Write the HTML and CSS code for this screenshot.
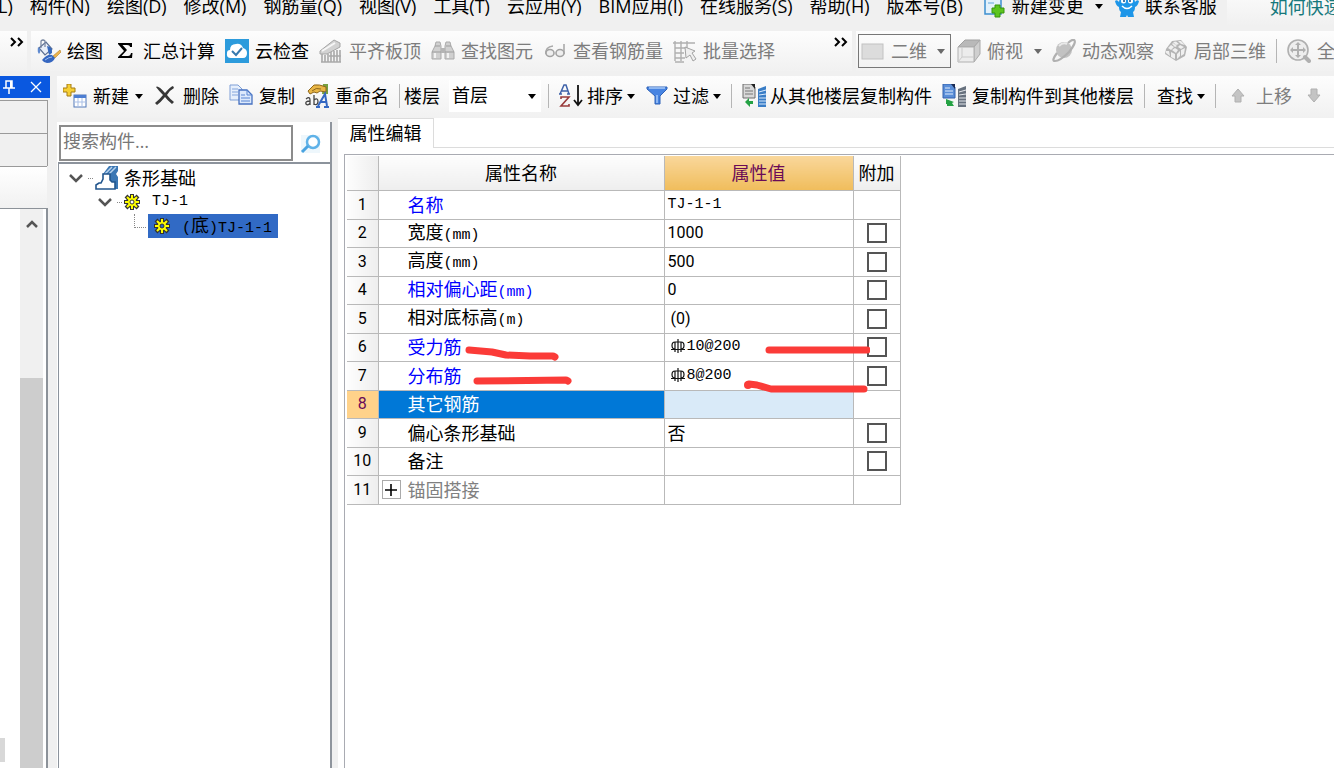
FILE: index.html
```html
<!DOCTYPE html>
<html lang="zh-CN">
<head>
<meta charset="utf-8">
<title>属性编辑</title>
<link rel="stylesheet" href="styles.css">
</head>
<body>
<div class="app">
  <nav class="menubar">
    <button class="menu">L)</button>
    <button class="menu">构件(N)</button>
    <button class="menu">绘图(D)</button>
    <button class="menu">修改(M)</button>
    <button class="menu">钢筋量(Q)</button>
    <button class="menu">视图(V)</button>
    <button class="menu">工具(T)</button>
    <button class="menu">云应用(Y)</button>
    <button class="menu">BIM应用(I)</button>
    <button class="menu">在线服务(S)</button>
    <button class="menu">帮助(H)</button>
    <button class="menu">版本号(B)</button>
    <button class="menu tool">
      <svg class="icon" viewBox="0 0 24 24"><path d="M3 0H19V20H3Z" fill="#e3f1fb" stroke="#3d8fd0" stroke-width="1.5"/><path d="M6 5H16M6 9H12" stroke="#8fc0e6" stroke-width="1.5"/><path d="M12 10H17V13H21V18H17V22H12V18H9V13H12Z" transform="translate(1 1)" fill="#5cc51e" stroke="#37930d"/></svg>
      <span>新建变更</span><i class="caret wide"></i>
    </button>
    <button class="menu tool">
      <svg class="icon" viewBox="0 0 24 24"><path d="M0 7Q2 5 4 8Q5 1 12 1Q19 1 20 8Q22 5 24 7Q23 12 20 13Q20 17 18 18L19 23H13L12 21L11 23H5L6 18Q4 17 4 13Q1 12 0 7Z" fill="#1e96e8"/><circle cx="8.500" cy="7" r="2.500" fill="#fff"/><circle cx="15.500" cy="7" r="2.500" fill="#fff"/><circle cx="9" cy="7" r="1" fill="#124a84"/><circle cx="15" cy="7" r="1" fill="#124a84"/><path d="M7 12Q12 17 17 12" stroke="#fff" stroke-width="1.500" fill="none"/></svg>
      <span>联系客服</span>
    </button>
    <a class="help" href="#">如何快速</a>
  </nav>

  <div class="bars">
    <div class="bar bar-stub"><button class="more" aria-label="更多">
      <svg width="14" height="10" viewBox="0 0 14 10"><path d="M1 1L5 5L1 9M8 1L12 5L8 9" fill="none" stroke="#000" stroke-width="2"/></svg></button></div>
    <div class="bar bar-main">
      <button class="tool">
        <svg class="icon" viewBox="0 0 24 24"><path d="M2 9L9 3L15 10L8 16Z" fill="#e9eef8" stroke="#5d6f92" stroke-width="1.200"/><path d="M4 9V2Q6 0 8 2V8" fill="none" stroke="#76849f" stroke-width="1.200"/><path d="M1 8Q0 13 2 15Q4 13 3 10Z" fill="#5f8ad0"/><path d="M10 7Q16 8 15 14L12 16Z" fill="#3769bd"/><path d="M23 11L24 13L18 19L16 17Z" fill="#ecb44d" stroke="#b67d21" stroke-width=".6"/><path d="M5 21Q10 15 15 16L18 19Q16 24 10 24Q7 24 5 21Z" fill="#3566c0"/><path d="M8 21Q12 18 15 18" stroke="#9bbcf0" fill="none"/></svg>
        <span>绘图</span></button>
      <button class="tool">
        <svg class="icon" viewBox="0 0 24 24"><path d="M5 4H19V8H17Q17 6 14 6H9.500L14 11L8.500 17H15Q17.500 17 18 14H19.500L19 19H5V18L11 12L5 5Z"/></svg>
        <span>汇总计算</span></button>
      <button class="tool">
        <svg class="icon" viewBox="0 0 24 24"><rect width="24" height="24" fill="#2c9bdc"/><path d="M6 19Q1 19 2 14Q2 11 5 11Q5 5 11 5Q16 4 18 9Q22 10 22 14Q22 19 18 19Z" fill="#fff"/><path d="M7 12L11 16L17 9" fill="none" stroke="#3679ae" stroke-width="2"/></svg>
        <span>云检查</span></button>
      <button class="tool off">
        <svg class="icon" viewBox="0 0 24 24"><path d="M1 12L15 1L21 4V8L8 15H1Z" fill="#d2d2d2" stroke="#a5a5a5"/><path d="M3 12L16 4" stroke="#f6f6f6" stroke-width="2"/><path d="M3 15V23M6 16V23M9 15V23M12 13V23M15 12V23M18 11V23M21 11V23M2 23H22M10 17H22" stroke="#a9a9a9" stroke-width="1.600"/></svg>
        <span>平齐板顶</span></button>
      <button class="tool off">
        <svg class="icon" viewBox="0 0 24 24"><path d="M4 7L5 3H9L10 7V20H1V13ZM20 7L19 3H15L14 7V20H23V13Z" fill="#d0d0d0" stroke="#aaa"/><path d="M10 9H14V14H10Z" fill="#b5b5b5"/><path d="M4 14V19M17 14V19" stroke="#f2f2f2" stroke-width="2"/><path d="M4 7H9M15 7H20M1 13H10M14 13H23" stroke="#9d9d9d"/></svg>
        <span>查找图元</span></button>
      <button class="tool off">
        <svg class="icon" viewBox="0 0 24 24"><path d="M10 7Q2 8 3 15M21 5V15" fill="none" stroke="#aaa" stroke-width="1.600"/><ellipse cx="7" cy="14" rx="4" ry="3.500" fill="#eee" stroke="#a3a3a3" stroke-width="1.600"/><ellipse cx="17" cy="14" rx="4" ry="3.500" fill="#eee" stroke="#a3a3a3" stroke-width="1.600"/></svg>
        <span>查看钢筋量</span></button>
      <button class="tool off">
        <svg class="icon" viewBox="0 0 24 24"><path d="M2 2V22M8 2V22M14 2V10M0 4H22M2 9H12M2 14H11M2 19H12M2 23H11" stroke="#b0b0b0" stroke-width="1.400"/><path d="M12 8L22 12L19 14L23 20L20 22L17 16L13 19Z" fill="#efefef" stroke="#a3a3a3"/></svg>
        <span>批量选择</span></button>
      <button class="more end" aria-label="更多工具">
        <svg width="14" height="10" viewBox="0 0 14 10"><path d="M1 1L5 5L1 9M8 1L12 5L8 9" fill="none" stroke="#000" stroke-width="2"/></svg></button>
    </div>
    <div class="bar bar-view">
      <label class="combo framed">
        <svg class="icon" viewBox="0 0 24 24"><rect x="1" y="5" width="21" height="15" fill="#dcdcdc" stroke="#c2c2c2"/></svg>
        <select class="pick off" aria-label="视图"><option>二维</option></select><i class="caret grey"></i>
      </label>
      <button class="tool off">
        <svg class="icon" viewBox="0 0 24 24"><path d="M1 8L8 1H23L17 8Z" fill="#b9b9b9" stroke="#a1a1a1"/><path d="M17 8L23 1V15L17 23Z" fill="#cfcfcf" stroke="#a9a9a9"/><path d="M1 8H17V23H1Z" fill="#ececec" stroke="#b0b0b0"/><path d="M5 8V18H17M5 18L1 23" fill="none" stroke="#cacaca"/></svg>
        <span>俯视</span><i class="caret grey wide"></i></button>
      <button class="tool off">
        <svg class="icon" viewBox="0 0 24 24"><circle cx="12" cy="11" r="8" fill="#c2c2c2"/><path d="M7 7Q11 3 15 5" fill="none" stroke="#e9e9e9" stroke-width="2"/><path d="M5 14Q-1 22 3 22Q8 22 17 13Q25 3 22 1Q20 0 16 4" fill="none" stroke="#b0b0b0" stroke-width="2.200"/></svg>
        <span>动态观察</span></button>
      <button class="tool off">
        <svg class="icon" viewBox="0 0 24 24"><path d="M8 2L17 1L23 8L21 17L12 22L1 15L2 10Z" fill="#b4b4b4"/><path d="M9 3L12 2.500L15 5L12 6ZM14 2L17 2L21 6L17 5ZM4 9L7 6L10 8L7 11ZM8 5L9 4L13 7L11 8ZM2 12L5 12L6 17L2 14ZM7 13L11 15V20L7 18ZM8 11L11 9L14 11L12 14ZM13 15L16 12V17L13 20ZM17 11L21 9L20 15L17 17ZM14 8L16 6L20 8L17 10Z" fill="#efefef"/></svg>
        <span>局部三维</span></button>
      <i class="sep"></i>
      <button class="tool off">
        <svg class="icon" viewBox="0 0 24 24"><circle cx="11" cy="11" r="10" fill="#eee" stroke="#b0b0b0" stroke-width="1.600"/><path d="M11 3L14 6H12V10H16V8L19 11L16 14V12H12V16H14L11 19L8 16H10V12H6V14L3 11L6 8V10H10V6H8Z" fill="#b0b0b0"/><path d="M18 18L22 22" stroke="#b0b0b0" stroke-width="4" stroke-linecap="round"/></svg>
        <span>全屏</span></button>
    </div>
  </div>

  <div class="body">
    <aside class="dock">
      <div class="dock-title">
        <button class="dock-btn" aria-label="固定"><svg width="12" height="14" viewBox="0 0 12 14"><path d="M3 1H9V8H3ZM0 8H12M6 8V14" fill="none" stroke="#fff" stroke-width="1.500"/><path d="M8 1V8" stroke="#fff" stroke-width="2"/></svg></button>
        <button class="dock-btn" aria-label="关闭"><svg width="12" height="12" viewBox="0 0 12 12"><path d="M1 1L11 11M11 1L1 11" stroke="#fff" stroke-width="1.300"/></svg></button>
      </div>
      <div class="dock-cell"></div>
      <div class="dock-cell"></div>
      <div class="dock-head"></div>
      <div class="dock-list">
        <div class="dock-items"><i class="dock-chip"></i></div>
        <div class="scroll">
          <button class="scroll-up" aria-label="向上"><svg width="12" height="10" viewBox="0 0 12 10"><path d="M1 8L6 3L11 8" fill="none" stroke="#555" stroke-width="2.500"/></svg></button>
          <i class="thumb"></i>
        </div>
      </div>
    </aside>

    <main class="work">
      <div class="bar bar-edit">
        <button class="tool">
          <svg class="icon" viewBox="0 0 24 24"><path d="M4 0H8V4H12V8H8V12H4V8H0V4H4Z" fill="#f6cf35" stroke="#a67c12"/><rect x="11" y="11" width="12" height="12" fill="#fff" stroke="#5378b8"/><path d="M11 11H23V14H11Z" fill="#4d7ed2"/><path d="M11 18H23M15 14V23M19 14V23" stroke="#a9bfe6"/></svg>
          <span>新建</span><i class="caret"></i></button>
        <button class="tool">
          <svg class="icon" viewBox="0 0 24 24"><path d="M3 3Q5 1 12 9Q17 3 20 2L21 4Q17 6 14 11Q17 15 21 18L19 20Q14 16 12 13Q8 18 4 21L2 19Q7 15 10 11Q6 7 3 3Z" fill="#373737"/></svg>
          <span>删除</span></button>
        <button class="tool">
          <svg class="icon" viewBox="0 0 24 24"><path d="M1 1H9L13 5V16H1Z" fill="#e6effc" stroke="#7e9fd6"/><path d="M3 5H9M3 8H9M3 11H9" stroke="#83a5dc"/><path d="M10 6H18L23 11V20H10Z" fill="#dce9fc" stroke="#4772c1" stroke-width="1.300"/><path d="M18 6V11H23M12 11H16M12 14H21M12 17H21" fill="none" stroke="#5885d2"/></svg>
          <span>复制</span></button>
        <button class="tool">
          <svg class="icon" viewBox="0 0 24 24"><path d="M18 0H23V10H17Z" fill="#76a040"/><path d="M3 7L9 1Q14 0 21 3V8L15 7L12 9L9 8L5 10Z" fill="#e9b646" stroke="#8e671c"/><path d="M7 7Q11 3 16 5" stroke="#8e671c" fill="none"/><path d="M1 15Q5 12 5 16V21M5 17Q0 17 1 20Q3 22 5 19M9 11V21M9 16Q13 13 13 18Q12 22 9 20" fill="none" stroke="#454545" stroke-width="1.300"/><path d="M13 22L20 10L22 22M15 18H22M11 23H15M19 23H24" fill="none" stroke="#3568c2" stroke-width="2"/></svg>
          <span>重命名</span></button>
        <i class="sep"></i>
        <label class="floor">楼层
          <span class="combo"><select class="pick"><option>首层</option></select><i class="caret"></i></span>
        </label>
        <i class="sep"></i>
        <button class="tool tight">
          <svg class="icon" viewBox="0 0 24 24"><path d="M1 10L5 1H7L10 10M3 7H9M0 10H3M8 10H11" fill="none" stroke="#3f62a9" stroke-width="1.500"/><path d="M2 15V13H10L2 22H10V20" fill="none" stroke="#993b3b" stroke-width="1.600"/><path d="M19 1V20M15 16L19 21L23 16" fill="none" stroke="#111" stroke-width="1.800"/></svg>
          <span>排序</span><i class="caret"></i></button>
        <button class="tool tight">
          <svg class="icon" viewBox="0 0 24 24"><path d="M2 3H22V5L15 12V20H10V12L2 5Z" fill="#4784e2" stroke="#2f62b8"/><path d="M4 4H20" stroke="#a9caf7" stroke-width="1.500"/><path d="M12 11V19" stroke="#a5c8f8" stroke-width="1.500"/></svg>
          <span>过滤</span><i class="caret"></i></button>
        <i class="sep"></i>
        <button class="tool tight">
          <svg class="icon" viewBox="0 0 24 24"><path d="M1 0H10L13 3V14H1Z" fill="#d8d8d8" stroke="#6d6d6d"/><path d="M9 0H13V5Z" fill="#222"/><path d="M3 4H8M3 7H11M3 10H11" stroke="#777"/><path d="M3 18L7 14V17H11V20H8V23Z" fill="#25a244"/><path d="M16 5L24 2V23H16Z" fill="#397dc6"/><path d="M17 8L24 6M17 11L24 10M17 14H24M17 17H24M17 20H24" stroke="#d9eafc"/></svg>
          <span>从其他楼层复制构件</span></button>
        <button class="tool">
          <svg class="icon" viewBox="0 0 24 24"><path d="M1 0H10L13 3V14H1Z" fill="#5a8ed8" stroke="#3463ad"/><path d="M9 0H13V5Z" fill="#1b2b52"/><path d="M3 4H8M3 7H11M3 10H11" stroke="#e1edfc"/><path d="M4 15L12 18L10 19L12 22H5V20H4Z" fill="#25a244"/><path d="M16 5L24 2V23H16Z" fill="#67717e"/><path d="M17 8L24 6M17 11L24 10M17 14H24M17 17H24M17 20H24" stroke="#e2e6ea"/></svg>
          <span>复制构件到其他楼层</span></button>
        <i class="sep"></i>
        <button class="tool tight find"><span>查找</span><i class="caret"></i></button>
        <i class="sep"></i>
        <button class="tool off">
          <svg class="icon" viewBox="0 0 24 24"><path d="M12 5L18 12H15V18H9V12H6Z" fill="#c4c4c4" stroke="#b0b0b0"/></svg>
          <span>上移</span></button>
        <button class="tool off" aria-label="下移">
          <svg class="icon" viewBox="0 0 24 24"><path d="M12 18L18 11H15V5H9V11H6Z" fill="#c4c4c4" stroke="#b0b0b0"/></svg></button>
      </div>

      <div class="panes">
        <section class="parts">
          <div class="search">
            <input class="search-box" type="text" placeholder="搜索构件…" aria-label="搜索构件">
            <button class="search-go" aria-label="搜索"><svg width="22" height="22" viewBox="0 0 22 22"><rect x="1" y="2" width="19" height="18" fill="#eef7fc"/><circle cx="13" cy="9" r="6" fill="#fff" stroke="#5fb2e8" stroke-width="2.500"/><path d="M8 13L2 19" stroke="#4aa3e0" stroke-width="3"/></svg></button>
          </div>
          <ul class="tree">
            <li class="node">
              <svg class="fold" viewBox="0 0 14 10"><path d="M1 2L7 8L13 2" fill="none" stroke="#555" stroke-width="2.500"/></svg><i class="dots"></i>
              <svg class="icon" viewBox="0 0 24 24"><path d="M8 8L14 0H23V5L21 8L23 11V23H17L14 9Z" fill="#3b77b4"/><path d="M10 8L17 1M14 8L21 1" stroke="#b9d3ec" stroke-width="1.500"/><path d="M8 8H15V14L17 16H20V23H1V19L4 17H6L8 13Z" fill="#fff" stroke="#22568d" stroke-width="1.600"/></svg>
              <span class="leaf">条形基础</span></li>
            <li class="node lv2">
              <svg class="fold" viewBox="0 0 14 10"><path d="M1 2L7 8L13 2" fill="none" stroke="#555" stroke-width="2.500"/></svg><i class="dots"></i>
              <svg class="gear" viewBox="0 0 16 16"><path d="M8 0V16M0 8H16M2 2L14 14M14 2L2 14" stroke="#333" stroke-width="4"/><circle cx="8" cy="8" r="6" fill="#333"/><path d="M8 1V15M1 8H15M3 3L13 13M13 3L3 13" stroke="#ff0" stroke-width="2"/><circle cx="8" cy="8" r="4" fill="#ff0"/><circle cx="8" cy="8" r="2" fill="#fff" stroke="#333"/></svg>
              <span class="leaf mono">TJ-1</span></li>
            <li class="node lv3"><i class="elbow"></i>
              <span class="picked">
                <svg class="gear" viewBox="0 0 16 16"><path d="M8 0V16M0 8H16M2 2L14 14M14 2L2 14" stroke="#333" stroke-width="4"/><circle cx="8" cy="8" r="6" fill="#333"/><path d="M8 1V15M1 8H15M3 3L13 13M13 3L3 13" stroke="#ff0" stroke-width="2"/><circle cx="8" cy="8" r="4" fill="#ff0"/><circle cx="8" cy="8" r="2" fill="#316ac5" stroke="#333"/></svg>
                <span class="leaf"><span class="mono">(</span>底<span class="mono">)TJ-1-1</span></span></span></li>
          </ul>
        </section>

        <section class="props">
          <div class="tabs"><button class="tab">属性编辑</button><i class="tab-rest"></i></div>
          <div class="sheet">
            <table class="grid">
              <colgroup><col class="c-no"><col class="c-name"><col class="c-val"><col class="c-add"></colgroup>
              <thead><tr><th></th><th>属性名称</th><th class="hot">属性值</th><th>附加</th></tr></thead>
              <tbody>
                <tr><th>1</th><td class="name key">名称</td><td class="mono">TJ-1-1</td><td></td></tr>
                <tr><th>2</th><td class="name">宽度<span class="mono">(mm)</span></td><td class="num">1000</td><td class="add"><input type="checkbox" aria-label="附加 宽度"></td></tr>
                <tr><th>3</th><td class="name">高度<span class="mono">(mm)</span></td><td class="num">500</td><td class="add"><input type="checkbox" aria-label="附加 高度"></td></tr>
                <tr><th>4</th><td class="name key">相对偏心距<span class="mono">(mm)</span></td><td class="num">0</td><td class="add"><input type="checkbox" aria-label="附加 相对偏心距"></td></tr>
                <tr><th>5</th><td class="name">相对底标高<span class="mono">(m)</span></td><td class="num inset">(0)</td><td class="add"><input type="checkbox" aria-label="附加 相对底标高"></td></tr>
                <tr><th>6</th><td class="name key">受力筋</td><td class="mono inset"><svg class="rebar" viewBox="0 0 14 14"><path d="M7 0V14M4 3Q1 3 1 6.500Q1 10 4 10M10 3Q13 3 13 6.500Q13 10 10 10M4 3H10M4 3V13M10 3V13M0 10.500H14" fill="none" stroke="#111" stroke-width="1.200"/></svg>10@200</td><td class="add"><input type="checkbox" aria-label="附加 受力筋"></td></tr>
                <tr><th>7</th><td class="name key">分布筋</td><td class="mono inset"><svg class="rebar" viewBox="0 0 14 14"><path d="M7 0V14M4 3Q1 3 1 6.500Q1 10 4 10M10 3Q13 3 13 6.500Q13 10 10 10M4 3H10M4 3V13M10 3V13M0 10.500H14" fill="none" stroke="#111" stroke-width="1.200"/></svg>8@200</td><td class="add"><input type="checkbox" aria-label="附加 分布筋"></td></tr>
                <tr class="current"><th>8</th><td class="name">其它钢筋</td><td class="val"></td><td></td></tr>
                <tr><th>9</th><td class="name">偏心条形基础</td><td>否</td><td class="add"><input type="checkbox" aria-label="附加 偏心条形基础"></td></tr>
                <tr><th>10</th><td class="name">备注</td><td></td><td class="add"><input type="checkbox" aria-label="附加 备注"></td></tr>
                <tr><th>11</th><td class="group"><div class="group-row"><button class="expand" aria-label="展开"><svg width="12" height="12" viewBox="0 0 12 12"><path d="M6 0V12M0 6H12" stroke="#000" stroke-width="1.600"/></svg></button>锚固搭接</div></td><td></td><td></td></tr>
              </tbody>
            </table>
            <svg class="marks" width="410" height="60" viewBox="0 0 410 60"><g fill="none" stroke="#fb3b38" stroke-width="7" stroke-linecap="round" stroke-linejoin="round"><path d="M9 10L32 12L46 15L70 16L93 16L95 17"/><path d="M17 41L106 40L108 41"/><path d="M309 10H407"/><path d="M289 44L297 45L311 49H404"/></g><circle cx="288" cy="45" r="4" fill="#fb3b38"/></svg>
          </div>
        </section>
      </div>
    </main>
  </div>
</div>
</body>
</html>
```
FILE: styles.css
```css
* { box-sizing: border-box; }

body {
  margin: 0;
  overflow: hidden;
  background: #f0f0f0;
  color: #000;
  font: 18px/24px "Open Sans", "Noto Sans CJK SC", sans-serif;
}

button, input, select {
  margin: 0;
  padding: 0;
  border: 0;
  background: none;
  color: inherit;
  font: inherit;
  white-space: nowrap;
}

.app { display: flex; flex-direction: column; height: 100vh; }

.icon { width: 24px; height: 24px; flex: none; }
.off { color: #7d7d7d; }
.mono { font-family: "Liberation Mono", monospace; font-size: 15px; line-height: 20px; }
.num { font-family: Roboto, sans-serif; font-size: 16px; }

.caret {
  flex: none;
  border: 4px solid transparent;
  border-top: 5px solid #000;
  border-bottom: 0;
}
.caret.grey { border-top-color: #6a6a6a; }
.caret.wide { margin-left: 5px; }

/* menu bar, scrolled partly out of the window */
.menubar {
  display: flex;
  align-items: flex-start;
  flex: none;
  gap: 17px;
  height: 31px;
  margin-left: -2px;
  overflow: hidden;
}
.menu { flex: none; height: 24px; margin-top: -6px; }
.menubar .tool { margin: -6px -7px 0 2px; }
.help {
  flex: 1 0 auto;
  height: 31px;
  margin-top: -5px;
  padding-left: 43px;
  background: linear-gradient(#fafafa, #f0f0f0);
  color: #16787c;
  text-decoration: none;
  white-space: nowrap;
}

/* toolbars */
.bars { display: flex; flex: none; gap: 4px; height: 40px; margin-bottom: 5px; }
.bar {
  display: flex;
  align-items: center;
  gap: 10px;
  flex: none;
  background: linear-gradient(#fdfdfd, #f1f1f1);
}
.bar > * { flex: none; }
.bar-stub { width: 27px; padding-left: 10px; }
.bar-main { width: 821px; padding-left: 6px; }
.bar-view { flex: 1; padding-left: 2px; overflow: hidden; }
.bar-view .combo { margin-right: -4px; }
.bar-edit { height: 42px; padding: 0 0 2px 6px; overflow: hidden; }

.tool { display: flex; align-items: center; gap: 6px; }
.tool.tight { gap: 4px; }
.more { display: flex; align-self: flex-start; padding-top: 6px; }
.more.end { margin-left: auto; margin-right: 4px; }
.sep { width: 1px; height: 24px; background: #b5b5b5; }
.find { padding-left: 2px; }

.combo { position: relative; display: flex; align-items: center; background: #fff; }
.combo .caret { position: absolute; right: 5px; pointer-events: none; }
.combo.framed {
  gap: 6px;
  width: 93px;
  height: 34px;
  padding-left: 2px;
  border: 1px solid #777;
  background: none;
}
.pick { appearance: none; width: 100%; height: 32px; outline: 0; }
.floor { display: flex; align-items: center; gap: 9px; margin: 0 -3px 0 -6px; }
.floor .combo { width: 92px; }
.floor .pick { padding-left: 3px; padding-bottom: 2px; }

/* docked pane */
.body { display: flex; flex: 1; min-height: 0; }
.dock { display: flex; flex-direction: column; flex: none; width: 50px; margin-right: 7px; }
.dock-title {
  display: flex;
  align-items: center;
  justify-content: space-between;
  height: 22px;
  margin-bottom: 2px;
  padding: 0 8px 0 3px;
  background: #0a58e0;
}
.dock-btn { display: flex; }
.dock-cell { height: 33px; margin-right: 2px; border: solid #9a9a9a; border-width: 1px 1px 0 0; }
.dock-head {
  height: 42px;
  margin-right: 3px;
  border-top: 1px solid #9a9a9a;
  background: linear-gradient(#fff, #f1f1f1);
}
.dock-list {
  display: flex;
  flex: 1;
  margin-right: 2px;
  padding-right: 3px;
  border: solid #8c9299;
  border-width: 1px 2px 0 0;
  background: #fff;
}
.dock-items { display: flex; align-items: flex-end; flex: 1; padding-bottom: 6px; }
.dock-chip { width: 5px; height: 24px; background: #d8d8d8; }
.scroll { display: flex; flex-direction: column; width: 23px; background: #f0f0f0; }
.scroll-up { display: flex; justify-content: center; height: 169px; padding-top: 10px; }
.thumb { flex: 1; background: #cdcdcd; }

/* component list */
.work { display: flex; flex-direction: column; flex: 1; min-width: 0; }
.panes { display: flex; flex: 1; min-height: 0; }
.parts {
  display: flex;
  flex-direction: column;
  flex: none;
  width: 275px;
  margin-top: 4px;
  border-right: 2px solid #8f959d;
  background: #fff;
}
.search { display: flex; height: 40px; padding: 3px 8px 0 2px; }
.search-box {
  flex: 1;
  min-width: 0;
  height: 36px;
  margin-right: 7px;
  padding: 0 2px 4px;
  border: 2px solid #8c8c8c;
  background: #fff;
}
.search-box::placeholder { color: #777; opacity: 1; }
.search-go { display: flex; align-items: center; }
.tree {
  flex: 1;
  margin: 0 0 0 1px;
  padding: 2px 0 0;
  border: solid #8c939c;
  border-width: 2px 0 0 1px;
  list-style: none;
}
.node { display: flex; align-items: center; height: 24px; padding-left: 10px; white-space: nowrap; }
.lv2 { padding-left: 39px; }
.lv3 { padding-left: 75px; }
.fold { width: 14px; height: 10px; }
.dots { width: 5px; margin: 0 2px 0 5px; border-top: 1px dotted #888; }
.gear { width: 16px; height: 16px; flex: none; }
.leaf { margin-left: 5px; }
.lv2 .leaf { margin-left: 12px; }
.elbow { width: 12px; height: 14px; margin: 0 2px 10px 0; border: dotted #888; border-width: 0 0 1px 1px; }
.picked {
  display: flex;
  align-items: center;
  height: 24px;
  padding: 0 6px;
  background: #316ac5;
}
.picked .leaf { margin-left: 12px; }

/* property editor */
.props { display: flex; flex-direction: column; flex: 1; min-width: 0; margin-left: 6px; background: #fff; }
.tabs { display: flex; flex: none; height: 30px; }
.tab { width: 96px; padding-bottom: 2px; border: solid #dcdcdc; border-width: 1px 1px 0 0; }
.tab-rest { flex: 1; border-bottom: 1px solid #dcdcdc; }
.sheet {
  position: relative;
  flex: 1;
  margin: 6px 0 0 6px;
  padding: 1px 0 0 2px;
  border: solid #a9abb2;
  border-width: 1px 0 0 1px;
}
.grid { width: 553px; table-layout: fixed; border-collapse: collapse; }
.c-no { width: 31px; }
.c-name { width: 286px; }
.c-val { width: 189px; }
.c-add { width: 47px; }
.grid th, .grid td { padding: 0; border: 1px solid #b9b9b9; font-weight: 400; line-height: 22px; white-space: nowrap; }
.grid thead th { height: 34px; border-top: 0; background: linear-gradient(#fdfdfd, #eee); }
.grid th:first-child { border-left: 0; background: linear-gradient(90deg, #fdfdfd, #eee); }
.grid .hot { background: linear-gradient(#f9d79b, #f0bd5c); color: #6a0b57; }
.grid tbody tr { height: 29px; }
.grid tbody tr:nth-child(even) { height: 28px; }
.grid tbody th { font-family: Roboto, sans-serif; font-size: 16px; }
.grid td { padding-left: 3px; }
.grid .name { padding-left: 29px; }
.grid .inset { padding-left: 6px; }
.key { color: #00f; }
.grid .add { padding: 0; text-align: center; }
.add input {
  display: block;
  appearance: none;
  width: 20px;
  height: 20px;
  margin: 0 auto;
  border: 2px solid #555;
  background: #fff;
}
.grid .current th:first-child { background: #ffd28a; color: #6a0b57; }
.current .name { background: #0078d7; color: #fff; }
.current .val { background: #d9eaf8; }
.rebar { width: 14px; height: 14px; margin-right: 2px; vertical-align: -3px; }
.group { color: #808080; }
.group-row { display: flex; align-items: center; gap: 7px; }
.expand {
  display: flex;
  align-items: center;
  justify-content: center;
  width: 19px;
  height: 19px;
  border: 1px solid #aaa;
  background: #fff;
}
.marks { position: absolute; left: 115px; top: 185px; pointer-events: none; }
```
